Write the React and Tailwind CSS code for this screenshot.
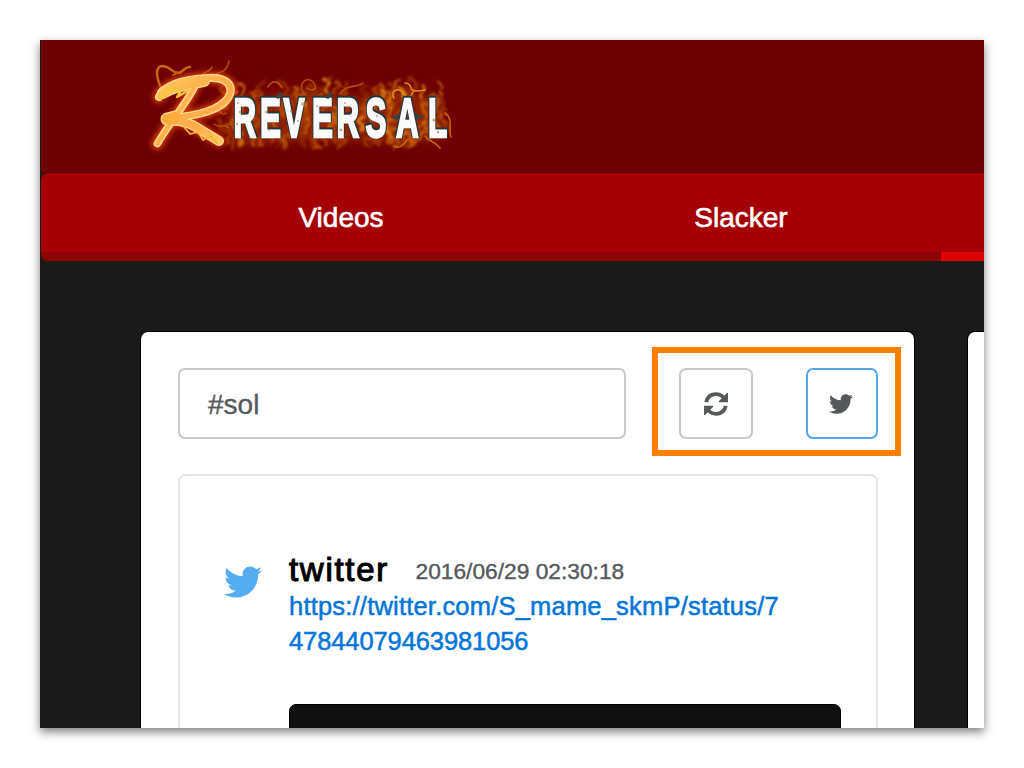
import React from "react";
import { FaTwitter } from "react-icons/fa";

const sans = "font-['Liberation_Sans',Arial,sans-serif]";

// Small deterministic generator so the flames keep the same shape on every render.
function makeRandom(seed) {
  let s = seed;
  return () => {
    s = (s * 16807) % 2147483647;
    return s / 2147483647;
  };
}

const flameColors = ["#8f2500", "#a83a02", "#c65a08", "#dd7a10", "#e8921c", "#9a3000", "#b54a05"];

function buildFlames() {
  const rnd = makeRandom(4217);
  const list = [];
  for (let i = 0; i < 190; i++) {
    const x = 220 + rnd() * 226;
    const y = 93 + rnd() * 56;
    const w = 4 + rnd() * 8;
    const h = 7 + rnd() * 12;
    const dir = rnd() > 0.5 ? 1 : -1;
    list.push({
      d: `M${x} ${y}c${dir * w} ${-h * 0.3} ${-dir * w} ${-h * 0.6} ${dir * w * 0.4} ${-h}`,
      color: flameColors[Math.floor(rnd() * flameColors.length)],
      width: 1.6 + rnd() * 3,
      opacity: 0.35 + rnd() * 0.45,
    });
  }
  return list;
}

const flames = buildFlames();

// Left edge of each letter of the wordmark, before the text is condensed.
const condense = 0.56;
const letterX = [233.5, 260, 283.5, 312, 336.5, 365.5, 396, 428].map((x) => (x - 233) / condense).join(" ");

const rShape =
  "M159 97C165 83 187 79 208 78C225 77 233 84 230 94C226 106 207 114 180 117";
const rStem = "M194 88C187 101 175 117 168 127C164 133 160 139 157.500 143.500";
const rLeg = "M169 121C180 120 189 123 196 127L219 141";

function Logo() {
  return (
    <svg className="block h-[110px] w-[320px]" viewBox="140 50 320 110" role="img" aria-label="Reversal">
      <defs>
        <linearGradient id="gold" gradientUnits="userSpaceOnUse" x1="155" y1="78" x2="225" y2="146">
          <stop offset="0" stopColor="#ffd060" />
          <stop offset=".3" stopColor="#ffb750" />
          <stop offset=".65" stopColor="#ffab48" />
          <stop offset="1" stopColor="#ffcf70" />
        </linearGradient>
        <filter id="glow" x="-30%" y="-30%" width="160%" height="160%">
          <feGaussianBlur stdDeviation="2.8" />
        </filter>
        <filter id="haze" x="-20%" y="-40%" width="140%" height="180%">
          <feGaussianBlur stdDeviation="5" />
        </filter>
        <filter id="curl" x="-10%" y="-20%" width="120%" height="140%" colorInterpolationFilters="sRGB">
          <feTurbulence type="fractalNoise" baseFrequency="0.06" numOctaves="1" seed="8" result="n" />
          <feDisplacementMap in="SourceGraphic" in2="n" scale="16" xChannelSelector="R" yChannelSelector="G" result="d" />
          <feGaussianBlur in="d" stdDeviation="0.8" />
        </filter>
        <filter id="soft">
          <feGaussianBlur stdDeviation="0.5" />
        </filter>
        <filter id="lettering" x="-5%" y="-20%" width="110%" height="140%" colorInterpolationFilters="sRGB">
          <feMorphology in="SourceAlpha" operator="dilate" radius="0.8" result="fat" />
          <feOffset in="fat" dx="-0.4" dy="-1" result="up" />
          <feFlood floodColor="#27353b" />
          <feComposite in2="up" operator="in" result="edge" />
          <feMerge result="all">
            <feMergeNode in="edge" />
            <feMergeNode in="SourceGraphic" />
          </feMerge>
          <feGaussianBlur in="all" stdDeviation="0.45" />
        </filter>
      </defs>

      <path d="M228 106L270 95L310 88L350 98L400 90L440 100L444 138L400 142L330 140L232 144Z" fill="#a03000" opacity=".65" filter="url(#haze)" />

      <g filter="url(#curl)" fill="none" strokeLinecap="round">
        {flames.map((f, i) => (
          <path key={i} d={f.d} stroke={f.color} strokeWidth={f.width} opacity={f.opacity} />
        ))}
      </g>
      <g filter="url(#soft)" fill="none" strokeLinecap="round" stroke="#c8640c" strokeWidth="1.6">
        <path d="M161 88C156 76 155 67 162 66C171 66 172 74 180 73C184 69 187 67 190 67" stroke="#c9680a" strokeWidth="2.4" />
        <path d="M173 75L182 71" />
        <path d="M213 76C219 70 226 75 229 61" opacity=".75" />
        <path d="M203 74C210 70 211 70 212 67" opacity=".8" />
        <path d="M268 87C272 80 278 80 282 88M303 92C298 84 307 75 313 82S312 92 307 88M340 94C345 84 358 88 363 83" opacity=".75" />
        <path d="M394 98C390 91 398 87 402 92S409 101 413 92M405 83C415 84 406 91 418 91L425 90" stroke="#e28a18" />
        <path d="M445 113C454 119 448 131 451 137M425 136C429 142 435 141 440 148M394 146C401 150 405 142 408 139" />
        <path d="M212 112C220 107 222 118 226 113M214 124C221 130 224 122 229 128M226 98C232 92 236 97 238 91" opacity=".7" />
      </g>

      <g fill="none" strokeLinecap="round" strokeLinejoin="round">
        <g stroke="#e24a08" strokeWidth="13" opacity=".75" filter="url(#glow)">
          <path d={rShape} />
          <path d={rStem} />
          <path d={rLeg} />
        </g>
        <g filter="url(#soft)">
          <g stroke="#ffd890" strokeWidth="8.2">
            <path d={rShape} />
            <path d={rStem} strokeWidth="7.6" />
            <path d={rLeg} strokeWidth="10" />
            <path d="M163 93C174 85 191 84 204 81" strokeWidth="12" />
            <path d="M167 119L175 117" strokeWidth="13" />
          </g>
          <g stroke="url(#gold)" strokeWidth="5.4">
            <path d={rShape} />
            <path d={rStem} strokeWidth="4.4" />
            <path d={rLeg} strokeWidth="7.4" />
            <path d="M164 93C174 85 191 84 204 81" strokeWidth="9.4" />
            <path d="M167 119L175 117" stroke="#ffab3d" strokeWidth="10.5" />
          </g>
          <path d="M161 99L168 89L180 92L177 97L189 90" stroke="#ffc63c" strokeWidth="2.4" />
          <path d="M184 127L190 134L198 132L203 140L210 136L217 143" stroke="#f6b62b" strokeWidth="1.8" />
        </g>
      </g>

      <g filter="url(#lettering)">
        <text
          transform={`translate(233 137.3) scale(${condense} 1)`}
          x={letterX}
          y="0"
          fontFamily="'Liberation Sans', Arial, sans-serif"
          fontWeight="700"
          fontSize="56"
          fill="#fbfafa"
          stroke="#fbfafa"
          strokeWidth="2.4"
        >
          REVERSAL
        </text>
      </g>
      <g filter="url(#soft)">
        <path d="M275 97L280 92L283 94L278 99ZM324 97L331 92L333 94L328 99ZM391 118L399 113V120ZM415 113L424 117L416 120Z" fill="#3b4141" />
        <g fill="#c98a52" opacity=".75">
          <circle cx="238" cy="103" r="1" /><circle cx="240" cy="112" r="1.2" /><circle cx="237" cy="124" r="1" />
          <circle cx="254" cy="118" r="1.1" /><circle cx="266" cy="112" r="1.2" /><circle cx="269" cy="130" r="1" />
          <circle cx="291" cy="111" r="1.2" /><circle cx="303" cy="104" r="1.8" /><circle cx="298" cy="121" r="1" />
          <circle cx="317" cy="106" r="1" /><circle cx="341" cy="130" r="1.4" /><circle cx="345" cy="103" r="1" />
          <circle cx="377" cy="116" r="1.1" /><circle cx="434" cy="120" r="1.6" /><circle cx="438" cy="132" r="1.2" />
        </g>
      </g>
    </svg>
  );
}

function RefreshIcon() {
  return (
    <svg className="block size-6" viewBox="0 0 24 24" fill="none">
      <g stroke="#55595c" strokeWidth="3.8">
        <path d="M2.2 10.2C3.3 5.3 7 2.2 12 2.2c3.3 0 6 1.4 8 3.9" />
        <path d="M21.8 13.8C20.7 18.7 17 21.8 12 21.8c-3.3 0-6-1.4-8-3.9" />
      </g>
      <path d="M24 1V10.2H14.8V9.2L23 1Z" fill="#55595c" />
      <path d="M0 23V13.8H9.2V14.8L1 23Z" fill="#55595c" />
    </svg>
  );
}

function NavItem({ children, className }) {
  return (
    <div className={`flex shrink-0 justify-center pt-6 text-[28px] leading-[42px] text-white [-webkit-text-stroke:0.6px_white] ${className}`}>
      {children}
    </div>
  );
}

export default function App() {
  return (
    <div className={`h-[768px] w-[1024px] overflow-hidden bg-white p-10 ${sans}`}>
      <div className="h-[688px] w-[944px] shadow-[0_4px_9px_rgba(0,0,0,0.5)]">
        <div className="flex h-full flex-col overflow-hidden bg-[#1a1a1a] pl-px">
          <header className="h-[132px] shrink-0 bg-[#6e0003] pt-[10px] pl-[99px]">
            <Logo />
          </header>
          <div className="h-px shrink-0 bg-[#520508]" />
          <nav className="flex h-[88px] shrink-0 flex-col overflow-hidden rounded-l-[7px] bg-[#a50003]">
            <div className="flex h-[79px] shrink-0 pl-[100px]">
              <NavItem className="w-[400px]">Videos</NavItem>
              <NavItem className="w-[400px]">Slacker</NavItem>
            </div>
            <div className="flex h-[9px]">
              <div className="w-[900px] bg-[#8d0003]" />
              <div className="flex-1 bg-[#dc0004]" />
            </div>
          </nav>
          <main className="flex min-h-0 flex-1 gap-[54px] pt-[71px] pl-[100px]">
            <section className="h-[396px] w-[773px] shrink-0 rounded-t-[7px] bg-white pt-[15px] pl-[37px] shadow-[0_0_0_1px_#000]">
              <div className="flex">
                <div className="mt-[21px] flex h-[71px] w-[448px] items-center rounded-[7px] border-2 border-[#c9c9c9] pt-0.5 pl-[28px] text-[28px] text-[#55595c] [-webkit-text-stroke:0.4px_#55595c]">
                  #sol
                </div>
                <div className="ml-[26px] flex h-[109px] w-[249px] shrink-0 border-6 border-[#ff8000] pt-[15px] pl-[21px]">
                  <button className="flex h-[71px] w-[74px] items-center justify-center rounded-[7px] border-2 border-[#c9c9c9]">
                    <RefreshIcon />
                  </button>
                  <button className="ml-[53px] flex h-[71px] w-[72px] items-center justify-center rounded-[7px] border-2 border-[#55a5ea] pr-0.5">
                    <FaTwitter className="size-6 text-[#55595c]" />
                  </button>
                </div>
              </div>
              <article className="mt-[18px] flex h-[300px] w-[700px] rounded-[7px] border-2 border-[#e5e5e5] pt-[76px] pl-[44px]">
                <FaTwitter className="mt-[11px] size-[38px] shrink-0 text-[#55acee]" />
                <div className="ml-[27px] w-[552px]">
                  <div className="flex h-[37px] items-start whitespace-nowrap">
                    <h2 className="-mt-px w-[126.5px] text-[33px] leading-[37px] tracking-[1.700px] text-black [-webkit-text-stroke:1.1px_black]">twitter</h2>
                    <time className="pt-[6px] text-[22.75px] leading-[26px] text-[#55595c] [-webkit-text-stroke:0.4px_#55595c]">2016/06/29 02:30:18</time>
                  </div>
                  <a className="block text-[25.5px] leading-[35px] whitespace-nowrap text-[#0275d8] [-webkit-text-stroke:0.5px_#0275d8]">
                    <span className="block tracking-[0.2px]">https://twitter.com/S_mame_skmP/status/7</span>
                    <span className="block tracking-[-0.1px]">47844079463981056</span>
                  </a>
                  <div className="mt-[45px] h-[80px] rounded-[7px] border border-black bg-[#101010]" />
                </div>
              </article>
            </section>
            <section className="h-[396px] w-[100px] shrink-0 rounded-tl-[7px] bg-white shadow-[0_0_0_1px_#000]" />
          </main>
        </div>
      </div>
    </div>
  );
}
